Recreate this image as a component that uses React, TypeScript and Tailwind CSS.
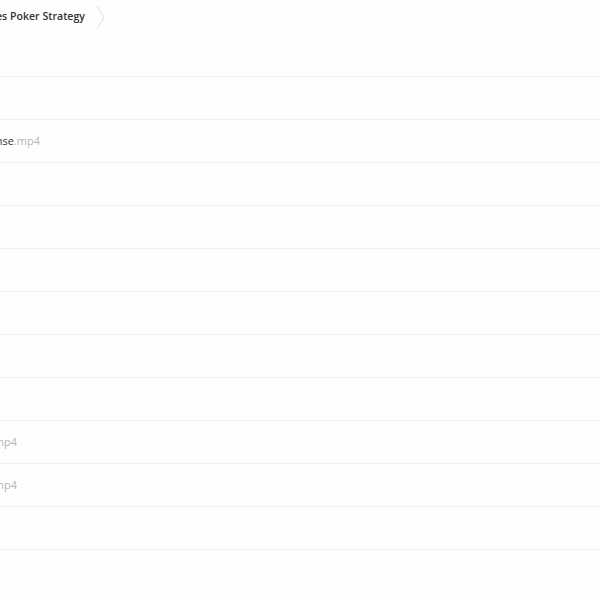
const ROWS = [
  { name: '', ext: '', w: 40 },
  { name: '02 - Continuation Betting and the Response', ext: '.mp4', w: 40 },
  { name: '', ext: '', w: 40 },
  { name: '', ext: '', w: 40 },
  { name: '', ext: '', w: 40 },
  { name: '', ext: '', w: 40 },
  { name: '', ext: '', w: 40 },
  { name: '', ext: '', w: 40 },
  { name: '', ext: '.mp4', w: 17 },
  { name: '', ext: '.mp4', w: 17 },
  { name: '', ext: '', w: 40 },
]

export default function App() {
  return (
    <div className="h-[600px] w-[600px] overflow-hidden bg-[#fefefe] font-['Open_Sans',sans-serif]">
      <div className="h-[77px] border-b border-[#efefef]">
        <div className="flex h-[33px] items-center">
          <div className="flex w-[85px] justify-end overflow-hidden whitespace-nowrap">
            <span className="text-[10.6px] font-semibold text-[#333]">Texas Hold'em Games Poker Strategy</span>
          </div>
          <svg className="ml-[11px] mt-[2px]" width="9" height="25" viewBox="0 0 9 25" fill="none">
            <path d="M1 1 L8 12.5 L1 24" stroke="#dcdcdc" strokeWidth="1" />
          </svg>
        </div>
      </div>
      {ROWS.map((r, i) => (
        <div key={i} className="flex h-[43px] items-center border-b border-[#efefef]">
          {r.ext ? (
            <div
              className={
                r.w === 17
                  ? 'flex w-[17px] justify-end overflow-hidden whitespace-nowrap text-[11px]'
                  : 'flex w-[40px] justify-end overflow-hidden whitespace-nowrap text-[11px]'
              }
            >
              <span>
                <span className="text-[#333]">{r.name}</span>
                <span className="text-[#b5b5b5]">{r.ext}</span>
              </span>
            </div>
          ) : null}
        </div>
      ))}
    </div>
  )
}
